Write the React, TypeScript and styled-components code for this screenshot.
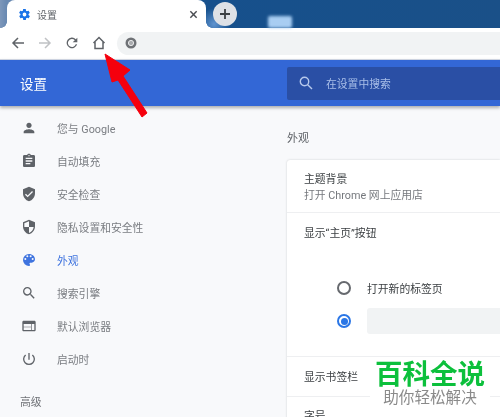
import React from "react";
import styled, { createGlobalStyle } from "styled-components";

const Global = createGlobalStyle`
  html, body { margin: 0; padding: 0; background: #f8f9fb; }
  body { font-family: Roboto, "Noto Sans CJK SC", sans-serif; }
  * { box-sizing: border-box; }
`;

const Page = styled.div`
  position: relative;
  width: 500px;
  height: 417px;
  overflow: hidden;
  display: flex;
  flex-direction: column;
  background: #f8f9fb;
  filter: blur(0.3px);
`;

const TabStrip = styled.div`
  position: relative;
  height: 28px;
  flex: none;
  display: flex;
  align-items: stretch;
  padding-left: 7px;
  background:
    radial-gradient(circle at 214px 24px, #5f93cf 0, rgba(95, 147, 207, 0) 16px),
    linear-gradient(90deg, #7d97ba 0, #6a8ab2 6px, #16508c 210px, #1a5088 100%);
`;

const Tab = styled.div`
  position: relative;
  width: 199px;
  display: flex;
  align-items: center;
  padding: 0 8px 0 11px;
  background: #fff;
  border-radius: 8px 8px 0 0;
  font-size: 10px;
  color: #5f6368;
  &::before,
  &::after {
    content: "";
    position: absolute;
    bottom: 0;
    width: 6px;
    height: 6px;
    background: radial-gradient(circle at 0 0, transparent 5.5px, #fff 6px);
  }
  &::before {
    left: -6px;
  }
  &::after {
    right: -6px;
    transform: scaleX(-1);
  }
`;

const TabTitle = styled.span`
  margin-left: 6px;
  flex: 1;
`;

const NewTab = styled.div`
  width: 24px;
  height: 24px;
  margin: 2px 0 0 7px;
  border-radius: 50%;
  background: #dee1e6;
  display: flex;
  align-items: center;
  justify-content: center;
`;

const Glow = styled.div`
  position: absolute;
  left: 268px;
  top: 16px;
  width: 24px;
  height: 12px;
  border-radius: 2px;
  background: #a8cdf2;
  filter: blur(1.5px);
`;

const Toolbar = styled.div`
  height: 31px;
  flex: none;
  display: flex;
  align-items: center;
  background: #fff;
  padding: 0 0 1px 10px;
  gap: 11px;
`;

const ToolIcon = styled.div`
  width: 16px;
  height: 16px;
  display: flex;
`;

const Omnibox = styled.div`
  flex: 1;
  height: 23px;
  margin-left: -1px;
  display: flex;
  align-items: center;
  padding-left: 8px;
  border-radius: 12px 0 0 12px;
  background: #f1f3f4;
`;

const Header = styled.div`
  height: 47px;
  flex: none;
  display: flex;
  align-items: center;
  justify-content: space-between;
  background: #3367d6;
  padding-left: 20px;
  border-top: 1px solid #cdd3e0;
  box-shadow: 0 2px 3px rgba(60, 64, 67, 0.4);
  position: relative;
  z-index: 1;
`;

const HeaderTitle = styled.div`
  color: #fff;
  font-size: 13.5px;
`;

const SearchBox = styled.div`
  width: 213px;
  height: 33px;
  display: flex;
  align-items: center;
  padding-left: 12px;
  gap: 13px;
  background: #2a4fa5;
  border-radius: 2px 0 0 2px;
  color: #a9bfe8;
  font-size: 10.8px;
`;

const Body = styled.div`
  flex: 1;
  display: flex;
  min-height: 0;
`;

const Sidebar = styled.nav`
  width: 287px;
  flex: none;
  padding-top: 5px;
  display: flex;
  flex-direction: column;
`;

const NavItem = styled.div<{ $active?: boolean }>`
  height: 33.1px;
  flex: none;
  display: flex;
  align-items: center;
  padding-left: 21px;
  gap: 20px;
  font-size: 10.8px;
  color: ${(p) => (p.$active ? "#3f74df" : "#7a7d82")};
`;

const NavIcon = styled.div`
  width: 16px;
  height: 16px;
  display: flex;
`;

const Advanced = styled.div`
  flex: none;
  margin: 17px 0 0 20px;
  font-size: 10.8px;
  color: #6f7277;
`;

const Main = styled.main`
  flex: 1;
  min-width: 0;
`;

const SectionTitle = styled.div`
  height: 54px;
  padding-top: 25px;
  font-size: 11px;
  line-height: 16px;
  color: #5f6368;
`;

const Card = styled.div`
  background: #fff;
  border-radius: 3px 0 0 0;
  box-shadow: 0 0 2px rgba(60, 64, 67, 0.25);
`;

const ThemeRow = styled.div`
  height: 53px;
  padding: 12px 0 0 17px;
  border-bottom: 1px solid #eeeff1;
`;

const RowTitle = styled.div`
  font-size: 10.8px;
  line-height: 16px;
  color: #3c4043;
`;

const RowSub = styled.div`
  font-size: 10.8px;
  line-height: 16px;
  color: #75787d;
`;

const HomeBlock = styled.div`
  height: 144px;
  padding: 13px 0 0 17px;
  border-bottom: 1px solid #eeeff1;
`;

const RadioRow = styled.div<{ $first?: boolean }>`
  display: flex;
  align-items: center;
  gap: 16px;
  height: 26px;
  margin: ${(p) => (p.$first ? "33px 0 7px 33px" : "0 0 0 33px")};
  font-size: 10.8px;
  color: #3c4043;
`;

const Radio = styled.span<{ $on?: boolean }>`
  width: 14px;
  height: 14px;
  flex: none;
  border-radius: 50%;
  border: 2px solid ${(p) => (p.$on ? "#2a76e6" : "#66696e")};
  display: flex;
  align-items: center;
  justify-content: center;
  &::after {
    content: "";
    width: 7px;
    height: 7px;
    border-radius: 50%;
    background: ${(p) => (p.$on ? "#2a76e6" : "transparent")};
  }
`;

const HomeInput = styled.div`
  flex: 1;
  height: 26px;
  background: #f1f3f4;
  border-radius: 3px 0 0 3px;
`;

const PlainRow = styled.div<{ $last?: boolean }>`
  height: 40px;
  padding: ${(p) => (p.$last ? "12px" : "13px")} 0 0 17px;
  border-bottom: 1px solid #eeeff1;
`;

const Arrow = styled.svg`
  position: absolute;
  left: 100px;
  top: 50px;
  z-index: 2;
`;

const Watermark = styled.div`
  position: absolute;
  left: 370px;
  top: 357px;
  width: 120px;
  height: 60px;
  z-index: 2;
  background: #fff;
  display: flex;
  flex-direction: column;
  align-items: center;
`;

const WatermarkTitle = styled.div`
  font-family: "Noto Sans CJK SC", sans-serif;
  font-size: 27.5px;
  line-height: 30px;
  font-weight: 700;
  color: #0cc03c;
`;

const WatermarkSub = styled.div`
  font-family: "Noto Sans CJK SC", sans-serif;
  font-size: 15.6px;
  line-height: 18px;
  color: #8a8a8a;
`;

const Icon = ({ d, fill = "#5f6368" }: { d: string; fill?: string }) => (
  <svg width="16" height="16" viewBox="0 0 24 24" fill={fill}>
    <path d={d} />
  </svg>
);

const nav = [
  { label: "您与 Google", d: "M12 12c2.200 0 4-1.800 4-4s-1.800-4-4-4-4 1.800-4 4 1.800 4 4 4zm0 2c-2.700 0-8 1.300-8 4v2h16v-2c0-2.700-5.300-4-8-4z" },
  { label: "自动填充", d: "M19 3h-4.200C14.400 1.800 13.300 1 12 1s-2.400.8-2.800 2H5c-1.100 0-2 .9-2 2v14c0 1.100.9 2 2 2h14c1.100 0 2-.9 2-2V5c0-1.100-.9-2-2-2zm-7 0c.6 0 1 .4 1 1s-.4 1-1 1-1-.4-1-1 .4-1 1-1zm2 14H7v-2h7v2zm3-4H7v-2h10v2zm0-4H7V7h10v2z" },
  { label: "安全检查", d: "M12 1 3 5v6c0 5.600 3.800 10.700 9 12 5.200-1.300 9-6.400 9-12V5l-9-4zm-2 16-4-4 1.400-1.400L10 14.200l6.600-6.600L18 9l-8 8z" },
  { label: "隐私设置和安全性", d: "M12 1 3 5v6c0 5.600 3.800 10.700 9 12 5.200-1.300 9-6.400 9-12V5l-9-4zm0 11h7c-.5 4.100-3.300 7.800-7 8.900V12H5V6.300l7-3.100V12z" },
  { label: "外观", active: true, d: "M12 3a9 9 0 0 0 0 18c.8 0 1.500-.7 1.500-1.500 0-.4-.1-.7-.4-1-.2-.3-.4-.6-.4-1 0-.8.7-1.500 1.500-1.500H16c2.800 0 5-2.200 5-5 0-4.400-4-8-9-8zm-5.500 9a1.500 1.500 0 1 1 0-3 1.500 1.500 0 0 1 0 3zm3-4a1.500 1.500 0 1 1 0-3 1.500 1.500 0 0 1 0 3zm5 0a1.500 1.500 0 1 1 0-3 1.500 1.500 0 0 1 0 3zm3 4a1.500 1.500 0 1 1 0-3 1.500 1.500 0 0 1 0 3z" },
  { label: "搜索引擎", d: "M15.500 14h-.79l-.28-.27A6.470 6.470 0 0 0 16 9.500 6.500 6.500 0 1 0 9.500 16c1.610 0 3.090-.59 4.230-1.570l.27.28v.79l5 4.990L20.490 19l-4.990-5zm-6 0C7.010 14 5 11.990 5 9.500S7.010 5 9.500 5 14 7.010 14 9.500 11.990 14 9.500 14z" },
  { label: "默认浏览器", d: "M20 4H4c-1.100 0-2 .9-2 2v12c0 1.100.9 2 2 2h16c1.100 0 2-.9 2-2V6c0-1.100-.9-2-2-2zm-5 14H4v-4h11v4zm0-5H4V9h11v4zm5 5h-4V9h4v9z" },
  { label: "启动时", d: "M13 3h-2v10h2V3zm4.800 2.200-1.400 1.400A7 7 0 1 1 7.600 6.600L6.200 5.200a9 9 0 1 0 11.600 0z" },
];

export default function App() {
  return (
    <Page>
      <Global />
      <TabStrip>
        <Tab>
          <svg width="13" height="13" viewBox="0 0 24 24" fill="#1a73e8">
            <path d="M19.400 13c0-.3.100-.6.100-1s0-.7-.1-1l2.100-1.600c.2-.2.200-.4.100-.6l-2-3.500c-.1-.2-.4-.3-.6-.2l-2.500 1c-.5-.4-1.100-.7-1.700-1l-.4-2.700c0-.2-.2-.4-.5-.4h-4c-.3 0-.5.200-.5.400l-.4 2.700c-.6.300-1.200.600-1.700 1l-2.500-1c-.2-.1-.5 0-.6.200l-2 3.500c-.1.200-.1.400.1.600L4.600 11c0 .3-.1.600-.1 1s0 .7.100 1l-2.100 1.600c-.2.200-.2.400-.1.600l2 3.500c.1.200.4.300.6.200l2.500-1c.5.400 1.100.7 1.700 1l.4 2.700c0 .2.200.4.500.4h4c.3 0 .5-.2.500-.4l.4-2.700c.6-.3 1.200-.6 1.700-1l2.500 1c.2.100.5 0 .6-.2l2-3.500c.1-.2.100-.4-.1-.6L19.400 13zM12 15.500a3.500 3.500 0 1 1 0-7 3.500 3.500 0 0 1 0 7z" />
          </svg>
          <TabTitle>设置</TabTitle>
          <svg width="9" height="9" viewBox="0 0 10 10" stroke="#4a4d52" strokeWidth="1.600" fill="none">
            <path d="M1.500 1.500l7 7M8.500 1.500l-7 7" />
          </svg>
        </Tab>
        <NewTab>
          <svg width="12" height="12" viewBox="0 0 12 12" stroke="#3c4043" strokeWidth="1.800" fill="none">
            <path d="M6 1v10M1 6h10" />
          </svg>
        </NewTab>
        <Glow />
      </TabStrip>
      <Toolbar>
        <ToolIcon>
          <svg width="16" height="16" viewBox="0 0 16 16" stroke="#5f6368" strokeWidth="1.500" fill="none">
            <path d="M14 8H3M8 3L3 8l5 5" />
          </svg>
        </ToolIcon>
        <ToolIcon>
          <svg width="16" height="16" viewBox="0 0 16 16" stroke="#c0c2c5" strokeWidth="1.500" fill="none">
            <path d="M2 8h11M8 3l5 5-5 5" />
          </svg>
        </ToolIcon>
        <ToolIcon>
          <svg width="16" height="16" viewBox="0 0 24 24" fill="#5f6368">
            <path d="M17.700 6.300A8 8 0 1 0 19.700 14h-2.100a6 6 0 1 1-1.400-6.200L13 11h7V4l-2.300 2.300z" />
          </svg>
        </ToolIcon>
        <ToolIcon>
          <svg width="16" height="16" viewBox="0 0 16 16" stroke="#5f6368" strokeWidth="1.500" fill="none">
            <path d="M2.500 8L8 2.500 13.500 8M4 7v6.500h8V7" />
          </svg>
        </ToolIcon>
        <Omnibox>
          <svg width="12" height="12" viewBox="0 0 12 12">
            <circle cx="6" cy="6" r="5.500" fill="#6f7276" />
            <circle cx="6" cy="6" r="2.600" fill="#a9abae" stroke="#e8e9ea" strokeWidth="1" />
          </svg>
        </Omnibox>
      </Toolbar>
      <Header>
        <HeaderTitle>设置</HeaderTitle>
        <SearchBox>
          <svg width="14" height="14" viewBox="0 0 14 14" stroke="#b7c9ec" strokeWidth="1.400" fill="none">
            <circle cx="5.500" cy="5.500" r="4.200" />
            <path d="M8.700 8.700L13 13" />
          </svg>
          <span>在设置中搜索</span>
        </SearchBox>
      </Header>
      <Body>
        <Sidebar>
          {nav.map((n) => (
            <NavItem key={n.label} $active={n.active}>
              <NavIcon>
                <Icon d={n.d} fill={n.active ? "#3f74df" : "#5f6368"} />
              </NavIcon>
              {n.label}
            </NavItem>
          ))}
          <Advanced>高级</Advanced>
        </Sidebar>
        <Main>
          <SectionTitle>外观</SectionTitle>
          <Card>
            <ThemeRow>
              <RowTitle>主题背景</RowTitle>
              <RowSub>打开 Chrome 网上应用店</RowSub>
            </ThemeRow>
            <HomeBlock>
              <RowTitle>显示“主页”按钮</RowTitle>
              <RadioRow $first>
                <Radio />
                打开新的标签页
              </RadioRow>
              <RadioRow>
                <Radio $on />
                <HomeInput />
              </RadioRow>
            </HomeBlock>
            <PlainRow>
              <RowTitle>显示书签栏</RowTitle>
            </PlainRow>
            <PlainRow $last>
              <RowTitle>字号</RowTitle>
            </PlainRow>
          </Card>
        </Main>
      </Body>
      <Arrow width="60" height="70" viewBox="0 0 60 70">
        <path d="M5 4 L30 20 L23 26 L47 63 L42 67 L18 30 L12 32 Z" fill="#f5000d" stroke="#f5000d" strokeWidth="1" strokeLinejoin="round" />
      </Arrow>
      <Watermark>
        <WatermarkTitle>百科全说</WatermarkTitle>
        <WatermarkSub>助你轻松解决</WatermarkSub>
      </Watermark>
    </Page>
  );
}
